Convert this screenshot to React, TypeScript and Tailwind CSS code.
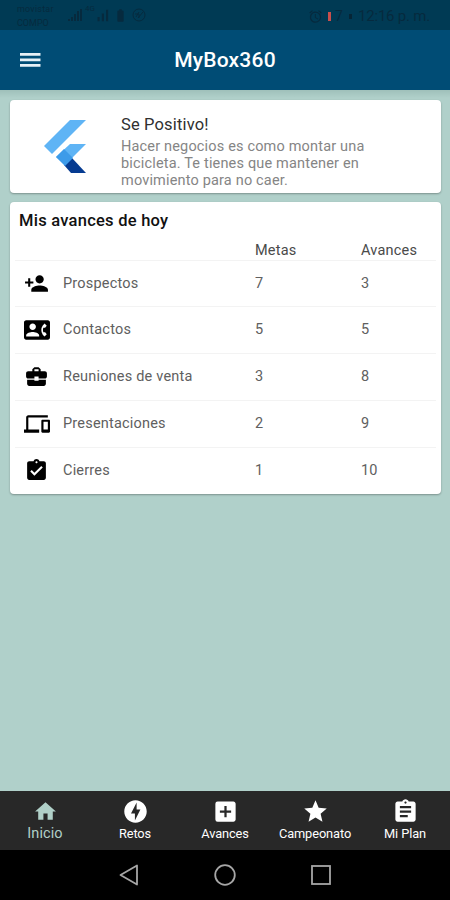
import React from "react";
import type { IconType } from "react-icons";
import {
  MdAddBox,
  MdAlarm,
  MdAssignment,
  MdAssignmentTurnedIn,
  MdBatteryFull,
  MdBusinessCenter,
  MdContactPhone,
  MdDevices,
  MdHome,
  MdOfflineBolt,
  MdPersonAdd,
  MdSignalCellularAlt,
  MdStar,
} from "react-icons/md";

const rows = [
  { icon: MdPersonAdd, size: 25, name: "Prospectos", meta: 7, avance: 3 },
  { icon: MdContactPhone, size: 26, name: "Contactos", meta: 5, avance: 5 },
  { icon: MdBusinessCenter, size: 25, name: "Reuniones de venta", meta: 3, avance: 8 },
  { icon: MdDevices, size: 26, name: "Presentaciones", meta: 2, avance: 9 },
  { icon: MdAssignmentTurnedIn, size: 25, name: "Cierres", meta: 1, avance: 10 },
];

function StatusBar() {
  return (
    <div className="flex h-[30px] items-center justify-between bg-[#003a54] pl-[17px] pr-[22px] text-[#062a3e]">
      <div className="flex h-full items-center">
        <div className="w-[38px] pt-[1px] text-[9px] leading-[14px]">
          <div className="tracking-[0.2px]">movistar</div>
          <div>COMPO</div>
        </div>
        <svg width="14" height="12" viewBox="0 0 14 12" className="ml-[13px]" fill="currentColor">
          <path d="M0 12v-2h2v2zM3 12V8h2v4zM6 12V5h2v7zM9 12V2h2v10zM12 12V0h2v12z" />
        </svg>
        <span className="ml-[3px] self-start pt-[3px] text-[8px]">4G</span>
        <MdSignalCellularAlt size={17} className="-ml-[1px]" />
        <MdBatteryFull size={15} className="ml-[2px]" />
        <svg width="14" height="14" viewBox="0 0 14 14" className="ml-[4px]" fill="none" stroke="currentColor">
          <circle cx="7" cy="7" r="6" />
          <path d="M3 6h4v4M6 10l5-6M4 9l3-5" />
        </svg>
      </div>
      <div className="flex h-full items-center pt-[2px]">
        <MdAlarm size={15} />
        <span className="ml-[5px] h-[9px] w-[3px] bg-[#c94f4c]" />
        <span className="ml-[4px] w-[9px] text-[14px]">7</span>
        <span className="ml-[5px] h-[5px] w-[3px] bg-[#062536]" />
        <span className="ml-[6px] w-[70px] whitespace-nowrap text-[15px] tracking-[-0.2px]">12:16 p. m.</span>
      </div>
    </div>
  );
}

function Header() {
  return (
    <div className="grid h-[60px] grid-cols-[60px_1fr_60px] items-center bg-[#004c75] text-white">
      <svg width="21" height="16" viewBox="0 0 21 16" className="ml-[20px]" fill="#e6f0f6">
        <path d="M0 1h20.500v2.800H0zM0 6.500h20.500v2.800H0zM0 12h20.500v2.800H0z" />
      </svg>
      <h1 className="pt-[2px] text-center text-[21px] font-medium tracking-[0.2px]">MyBox360</h1>
    </div>
  );
}

function Logo() {
  return (
    <svg width="43" height="54" viewBox="0 0 43 54">
      <path d="M26 0H42L8 34L0 26Z" fill="#5fb4f5" />
      <path d="M26 24H42L21 45L12 37Z" fill="#5fb4f5" />
      <path d="M20 45L28 38L42 53H27Z" fill="#063b91" />
      <path d="M20 29L29 38L21 46L12 37Z" fill="#3d9be9" />
    </svg>
  );
}

function PhraseCard() {
  return (
    <div className="flex h-[93px] rounded-[4px] bg-white pl-[34px] shadow-[0_1px_2px_rgba(0,0,0,0.3)]">
      <div className="w-[77px] pt-[20px]">
        <Logo />
      </div>
      <div>
        <h2 className="pt-[15px] text-[16.5px] leading-[20px] tracking-[0.15px] text-[#303030]">Se Positivo!</h2>
        <p className="mt-[3px] w-[270px] text-[14.5px] leading-[17px] tracking-[0.17px] text-[#858585]">
          Hacer negocios es como montar una bicicleta. Te tienes que mantener en movimiento para no caer.
        </p>
      </div>
    </div>
  );
}

function ProgressCard() {
  return (
    <div className="mt-[8.500px] h-[292px] rounded-[4px] bg-white px-[5px] pt-[9px] text-[14.5px] tracking-[0.2px] text-[#606060] shadow-[0_1px_2px_rgba(0,0,0,0.3)]">
      <h2 className="h-[31px] pl-[4px] text-[16.5px] leading-[20px] font-medium tracking-[0.25px] text-[#111111]">
        Mis avances de hoy
      </h2>
      <div className="grid h-[18px] grid-cols-[240px_106px_1fr] leading-[18px] text-[#4a4a4a]">
        <span className="col-start-2">Metas</span>
        <span>Avances</span>
      </div>
      {rows.map(({ icon: Icon, size, name, meta, avance }) => (
        <div
          key={name}
          className="grid h-[46.8px] grid-cols-[48px_192px_106px_1fr] items-center border-t border-[#f3f3f3]"
        >
          <Icon size={size} className="ml-[9px] text-black" />
          <span>{name}</span>
          <span>{meta}</span>
          <span>{avance}</span>
        </div>
      ))}
    </div>
  );
}

function NavItem({ icon: Icon, text, active }: { icon: IconType; text: string; active?: boolean }) {
  return (
    <div className={active ? "flex flex-col items-center text-[#b0d0c8]" : "flex flex-col items-center text-white"}>
      <Icon size={active ? 25 : 27} className={active ? "mt-[8px]" : "mt-[7px]"} />
      <span
        className={active ? "text-[14.5px] leading-[20px] tracking-[0.1px]" : "text-[12.8px] leading-[18px] tracking-[-0.1px]"}
      >
        {text}
      </span>
    </div>
  );
}

function BottomNav() {
  return (
    <div className="grid h-[59px] grid-cols-5 bg-[#282828]">
      <NavItem icon={MdHome} text="Inicio" active />
      <NavItem icon={MdOfflineBolt} text="Retos" />
      <NavItem icon={MdAddBox} text="Avances" />
      <NavItem icon={MdStar} text="Campeonato" />
      <NavItem icon={MdAssignment} text="Mi Plan" />
    </div>
  );
}

function SystemBar() {
  return (
    <div className="flex h-[50px] items-center justify-center gap-[74px] bg-black">
      <svg width="22" height="24" viewBox="0 0 22 24" fill="none" stroke="#a6a6a6" strokeWidth="1.8">
        <path d="M19 2.5V21.500L2.500 12Z" strokeLinejoin="round" />
      </svg>
      <svg width="22" height="22" viewBox="0 0 22 22" fill="none" stroke="#a6a6a6" strokeWidth="1.8">
        <circle cx="11" cy="11" r="9.800" />
      </svg>
      <svg width="22" height="22" viewBox="0 0 22 22" fill="none" stroke="#a6a6a6" strokeWidth="1.8">
        <rect x="2" y="2" width="18" height="18" />
      </svg>
    </div>
  );
}

function App() {
  return (
    <div className="flex h-[900px] w-[450px] flex-col overflow-hidden bg-[#b0d0ca] font-[Roboto,sans-serif]">
      <StatusBar />
      <Header />
      <div className="flex-1 bg-linear-to-b from-[#9fc0ba] to-[#b0d0ca] to-[8px] px-[10px] pt-[10px] pr-[9px]">
        <PhraseCard />
        <ProgressCard />
      </div>
      <BottomNav />
      <SystemBar />
    </div>
  );
}

export default App;
